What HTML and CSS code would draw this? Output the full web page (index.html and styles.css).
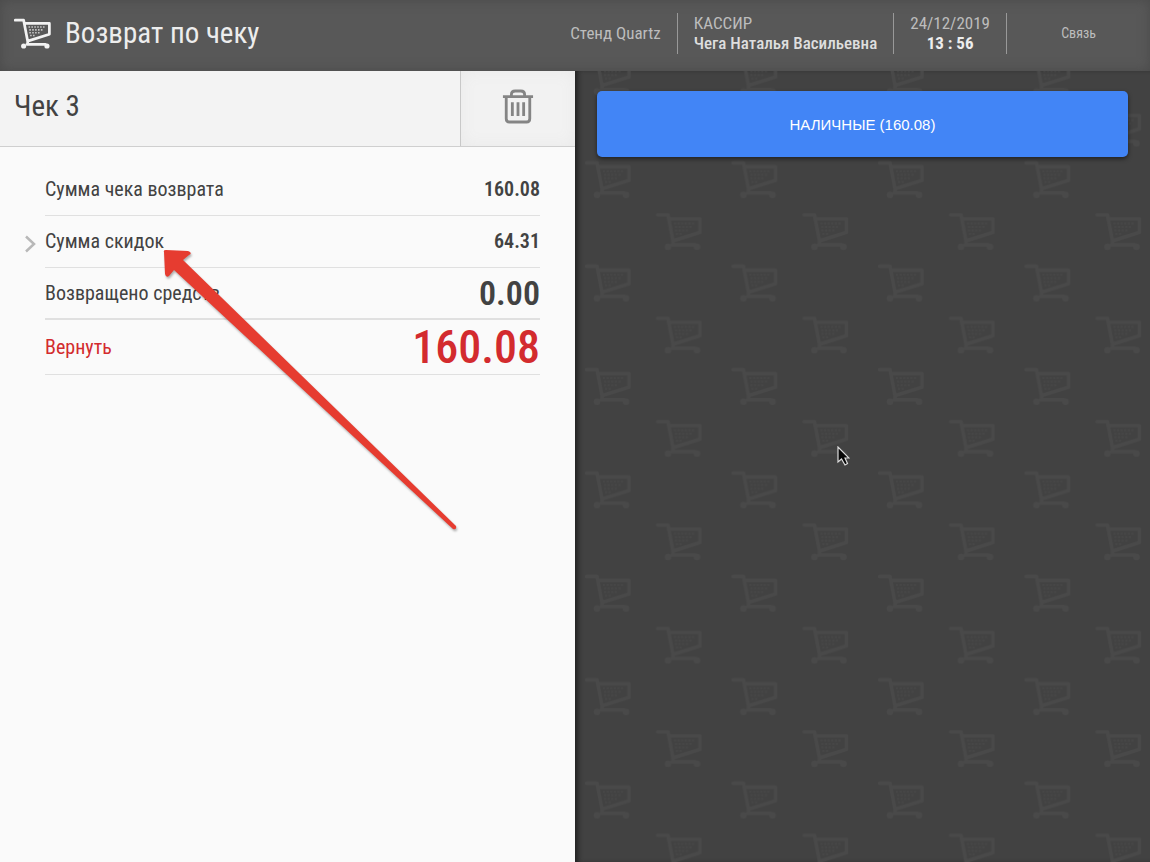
FILE: index.html
```html
<!DOCTYPE html>
<html lang="ru">
<head>
<meta charset="utf-8">
<title>Возврат по чеку</title>
<link rel="stylesheet" href="styles.css">
</head>
<body>
<svg class="defs" aria-hidden="true">
  <defs>
    <symbol id="cart" viewBox="0 0 46 38">
      <path d="M1.500 2.500H12L17 28.500L44 20V6.500H13.500M16 32.500H39M17 27V32" fill="none" stroke="currentColor" stroke-width="3.400" stroke-linejoin="round" stroke-linecap="round"/>
      <path d="M18 11h20M19 14.500h18M19 18h14M20 21.500h7" fill="none" stroke="currentColor" stroke-width="2" stroke-dasharray="2 1.600" opacity=".7"/>
      <circle cx="12" cy="34.500" r="3.200" fill="currentColor"/>
      <circle cx="41" cy="34.500" r="3.200" fill="currentColor"/>
    </symbol>
  </defs>
</svg>
<div class="app">
  <header class="topbar">
    <svg class="logo" aria-hidden="true"><use href="#cart"/></svg>
    <h1 class="title">Возврат по чеку</h1>
    <div class="stand">Стенд Quartz</div>
    <div class="cell"><span>КАССИР</span><span class="name">Чега Наталья Васильевна</span></div>
    <div class="cell clock"><span>24/12/2019</span><strong class="time">13 : 56</strong></div>
    <div class="cell link">Связь</div>
  </header>
  <main class="main">
    <section class="receipt">
      <div class="receipt-head">
        <h2 class="receipt-title">Чек 3</h2>
        <button class="trash" type="button" aria-label="Удалить">
          <svg width="32" height="35" viewBox="0 0 34 36" fill="none" stroke="#858585" stroke-width="3" aria-hidden="true">
            <path d="M1 7.500H33M10 7V5Q10 1.500 14 1.500H20Q24 1.500 24 5V7M4.500 8V31Q4.500 34.500 8 34.500H26Q29.500 34.500 29.500 31V8M11 13.500V28M17 13.500V28M23 13.500V28"/>
          </svg>
        </button>
      </div>
      <dl class="totals">
        <div class="row"><dt>Сумма чека возврата</dt><dd>160.08</dd></div>
        <div class="row">
          <button class="expand" type="button" aria-label="Показать скидки"><svg width="11" height="18" viewBox="0 0 11 18" fill="none" stroke="#b8b8b8" stroke-width="2.500" aria-hidden="true"><path d="M1 1.500L9 9L1 16.500"/></svg></button>
          <dt>Сумма скидок</dt><dd>64.31</dd></div>
        <div class="row paid"><dt>Возвращено средств</dt><dd class="big">0.00</dd></div>
        <div class="row due"><dt>Вернуть</dt><dd class="huge">160.08</dd></div>
      </dl>
      <svg class="arrow" width="300" height="286" viewBox="0 0 300 286" aria-hidden="true">
        <path d="M2 3Q1 1 4 1L26 2Q31 4 27 6L21 11L294 277Q295 281 291 280L12 21L7 27Q4 29 3 25Z" fill="#e63c30"/>
      </svg>
    </section>
    <section class="payment">
      <svg class="wallpaper" aria-hidden="true">
        <pattern id="carts" x="0" y="-20" width="146.500" height="103.400" patternUnits="userSpaceOnUse">
          <use href="#cart" x="10" y="6" width="46" height="38"/>
          <use href="#cart" x="81" y="58" width="46" height="38"/>
        </pattern>
        <rect width="100%" height="100%" fill="url(#carts)"/>
      </svg>
      <button class="pay" type="button">НАЛИЧНЫЕ (160.08)</button>
      <svg class="pointer" width="13" height="20" viewBox="0 0 13 20" aria-hidden="true"><path d="M1 1V16L4.500 13L8 19L10.500 17.500L8 12H12Z" fill="#080808" stroke="#ddd" stroke-width="1.200"/></svg>
    </section>
  </main>
</div>
</body>
</html>
```
FILE: styles.css
```css
* { box-sizing: border-box; }
body {
  margin: 0;
  font-family: "Roboto Condensed", "Liberation Sans Narrow", "Roboto", sans-serif;
  color: #424242;
}
h1, h2, dl, dd { margin: 0; font-weight: 400; }
button { border: 0; padding: 0; cursor: pointer; }
.defs { position: absolute; width: 0; height: 0; }
.app { min-height: 100vh; display: flex; flex-direction: column; }

.topbar {
  display: flex;
  align-items: center;
  height: 71px;
  padding: 0 0 5px 14px;
  background: #585858;
  box-shadow: inset 0 0 12px #4a4a4a;
  color: #bdbdbd;
  font-size: 17px;
  line-height: 20px;
  white-space: nowrap;
}
.logo { width: 37px; height: 31px; color: #f2f2f2; }
.title { flex: 1; margin-left: 14px; font-size: 29px; line-height: 36px; color: #ededed; }
.stand { padding-right: 16px; }
.cell {
  display: flex;
  flex-direction: column;
  justify-content: center;
  height: 41px;
  padding: 0 16px;
  border-left: 1px solid #999;
}
.name { color: #dedede; font-weight: 500; }
.clock { align-items: center; }
.time { color: #ededed; }
.link { width: 144px; align-items: center; font-size: 14px; }

.main { flex: 1; display: grid; grid-template-columns: 1fr 1fr; }
.receipt { position: relative; background: #fafafa; }
.receipt-head {
  display: flex;
  height: 76px;
  background: #f3f3f3;
  border-bottom: 1px solid #cfcfcf;
}
.receipt-title { flex: 1; padding: 17px 14px; font-size: 29px; line-height: 36px; }
.trash {
  display: flex;
  align-items: center;
  justify-content: center;
  width: 20%;
  padding-bottom: 5px;
  background: #f2f2f2;
  border-left: 1px solid #c8c8c8;
  box-shadow: inset 0 0 16px #e9e9e9;
}
.totals { padding: 17px 35px 0 45px; font-size: 20px; }
.row {
  position: relative;
  display: flex;
  align-items: center;
  justify-content: space-between;
  height: 52px;
  padding-bottom: 1px;
  border-bottom: 1px solid #e0e0e0;
}
.paid { border-bottom-width: 2px; }
.due { height: 55px; color: #d32b2e; }
.row dd { font-weight: 600; }
.row .big { font-size: 34px; }
.row .huge { font-size: 46px; font-weight: 500; }
.expand { position: absolute; left: -20px; top: 19px; height: 18px; background: none; }
.expand svg { display: block; }
.arrow { position: absolute; left: 162px; top: 178px; filter: drop-shadow(1px 2px 1px rgba(0, 0, 0, .3)); pointer-events: none; }

.payment {
  position: relative;
  padding: 20px 22px;
  background: #424242;
  box-shadow: inset 5px 0 5px -2px #222;
}
.wallpaper { position: absolute; inset: 0; width: 100%; height: 100%; color: #494949; }
.pay {
  position: relative;
  display: block;
  width: 100%;
  height: 66px;
  border-radius: 5px;
  background: #4285f6;
  box-shadow: 0 2px 4px rgba(0, 0, 0, .5);
  color: #fff;
  font-family: "Liberation Sans", Arial, sans-serif;
  font-size: 15px;
}
.pointer { position: absolute; left: 262px; top: 375px; }
```
